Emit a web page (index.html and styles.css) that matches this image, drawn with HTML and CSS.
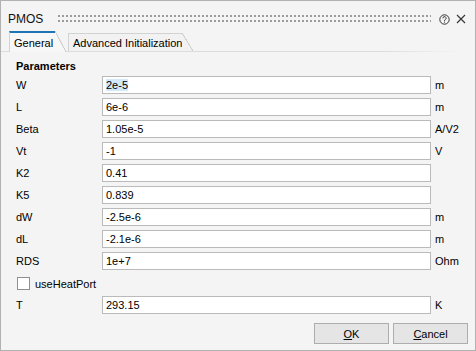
FILE: index.html
```html
<!DOCTYPE html>
<html lang="en">
<head>
    <meta charset="UTF-8">
    <title>PMOS</title>
    <link rel="stylesheet" href="styles.css">
</head>
<body>

    <div class="dialog">
        <div class="titlebar">
            <span class="title">PMOS</span>
            <div class="grip"></div>
            <svg class="tb-icon" width="11" height="11" viewBox="0 0 11 11">
                <circle cx="5.5" cy="5.5" r="4.7" fill="none" stroke="#333" stroke-width="1"/>
                <path d="M3.9 4.3 A1.6 1.6 0 1 1 6.3 5.6 C5.7 5.9 5.5 6.2 5.5 6.9" fill="none" stroke="#333" stroke-width="1"/>
                <rect x="5" y="7.6" width="1" height="1" fill="#333"/>
            </svg>
            <svg class="tb-icon close" width="10" height="10" viewBox="0 0 10 10">
                <path d="M1 1 L9 9 M9 1 L1 9" stroke="#333" stroke-width="1.1"/>
            </svg>
        </div>

        <div class="tabs">
            <div class="tab active">General</div>
            <div class="tab">Advanced Initialization</div>
        </div>

        <div class="panel">
            <div class="group-title">Parameters</div>
            <div class="form">
                <div class="label">W</div>
                <div class="field"><span class="sel">2e-5</span></div>
                <div class="unit">m</div>

                <div class="label">L</div>
                <div class="field">6e-6</div>
                <div class="unit">m</div>

                <div class="label">Beta</div>
                <div class="field">1.05e-5</div>
                <div class="unit">A/V2</div>

                <div class="label">Vt</div>
                <div class="field">-1</div>
                <div class="unit">V</div>

                <div class="label">K2</div>
                <div class="field">0.41</div>
                <div class="unit"></div>

                <div class="label">K5</div>
                <div class="field">0.839</div>
                <div class="unit"></div>

                <div class="label">dW</div>
                <div class="field">-2.5e-6</div>
                <div class="unit">m</div>

                <div class="label">dL</div>
                <div class="field">-2.1e-6</div>
                <div class="unit">m</div>

                <div class="label">RDS</div>
                <div class="field">1e+7</div>
                <div class="unit">Ohm</div>

                <div class="check-row">
                    <span class="checkbox"></span>
                    <span>useHeatPort</span>
                </div>

                <div class="label">T</div>
                <div class="field">293.15</div>
                <div class="unit">K</div>
            </div>
        </div>

        <div class="buttons">
            <div class="btn"><u>O</u>K</div>
            <div class="btn"><u>C</u>ancel</div>
        </div>
    </div>

</body>
</html>
```

FILE: styles.css
```css
body {
    margin: 0;
    padding: 0;
    font-family: "Liberation Sans", Arial, sans-serif;
    font-size: 11px;
    color: #000;
    background: #f4f4f4;
}

.dialog {
    width: 476px;
    height: 351px;
    box-sizing: border-box;
    border: 1px solid #b2b2b2;
    background: #f4f4f4;
    display: flex;
    flex-direction: column;
}

/* title bar */
.titlebar {
    height: 30px;
    box-sizing: border-box;
    padding: 6px 9px 0 7px;
    display: flex;
    align-items: center;
}

.title {
    font-size: 12px;
    line-height: 14px;
    color: #111;
}

.grip {
    flex: 1;
    height: 8px;
    margin: 0 8px 0 15px;
    background-image: radial-gradient(circle at 1px 1px, #9c9c9c 0.9px, transparent 1.3px);
    background-size: 4px 5px;
}

.tb-icon {
    display: block;
}

.close {
    margin-left: 6px;
}

/* tabs */
.tabs {
    height: 21px;
    padding-left: 8px;
    display: flex;
    align-items: flex-end;
    background: linear-gradient(to right, #dcdcdc, #dcdcdc 80%, rgba(220, 220, 220, 0) 97%) left bottom / 100% 1px no-repeat;
}

.tab {
    position: relative;
    box-sizing: border-box;
    height: 18px;
    margin-bottom: 1px;
    padding-left: 4px;
    display: flex;
    align-items: center;
    white-space: nowrap;
    flex: none;
    border-left: 1px solid #d2d2d2;
    border-top: 1px solid #d2d2d2;
    background: #f2f2f2;
    margin-left: 13px;
    width: 114px;
}

.tab::after {
    content: '';
    position: absolute;
    top: -1px;
    bottom: 0;
    right: -11px;
    width: 11px;
    background: linear-gradient(to top right, #f2f2f2 calc(50% - 0.6px), #cfcfcf calc(50% - 0.4px), #cfcfcf calc(50% + 0.4px), rgba(242, 242, 242, 0) calc(50% + 0.6px));
}

.tab.active {
    margin-left: 0;
    margin-bottom: 0;
    width: 46px;
    height: 21px;
    border-top: 2px solid #1f74b4;
    background: #f7f7f7;
    z-index: 1;
}

.tab.active::after {
    top: -2px;
    background: linear-gradient(to top right, #f7f7f7 calc(50% - 0.6px), #cfcfcf calc(50% - 0.4px), #cfcfcf calc(50% + 0.4px), rgba(247, 247, 247, 0) calc(50% + 0.6px));
}

/* panel */
.panel {
    padding: 7px 0 0 15px;
}

.group-title {
    font-weight: bold;
    line-height: 14px;
    margin-bottom: 3px;
}

.form {
    display: grid;
    grid-template-columns: 82px 329px auto;
    grid-auto-rows: 18px;
    row-gap: 4px;
    column-gap: 4px;
    align-items: center;
}

.label, .unit {
    line-height: 14px;
}

.field {
    height: 18px;
    box-sizing: border-box;
    border: 1px solid #bababa;
    background: #fff;
    padding-left: 3px;
    line-height: 16px;
    white-space: nowrap;
}

.sel {
    background: #d3e8f8;
}

.check-row {
    grid-column: 1 / 4;
    height: 17px;
    display: flex;
    align-items: center;
    margin-bottom: -1px;
}

.checkbox {
    width: 13px;
    height: 13px;
    box-sizing: border-box;
    border: 1px solid #8f8f8f;
    background: #fff;
    margin-left: 1px;
    margin-right: 5px;
}

/* buttons */
.buttons {
    margin-top: auto;
    padding: 0 7px 6px 0;
    display: flex;
    justify-content: flex-end;
    gap: 4px;
}

.btn {
    width: 75px;
    height: 21px;
    box-sizing: border-box;
    border: 1px solid #adadad;
    background: #e5e5e5;
    display: flex;
    align-items: center;
    justify-content: center;
}
```
